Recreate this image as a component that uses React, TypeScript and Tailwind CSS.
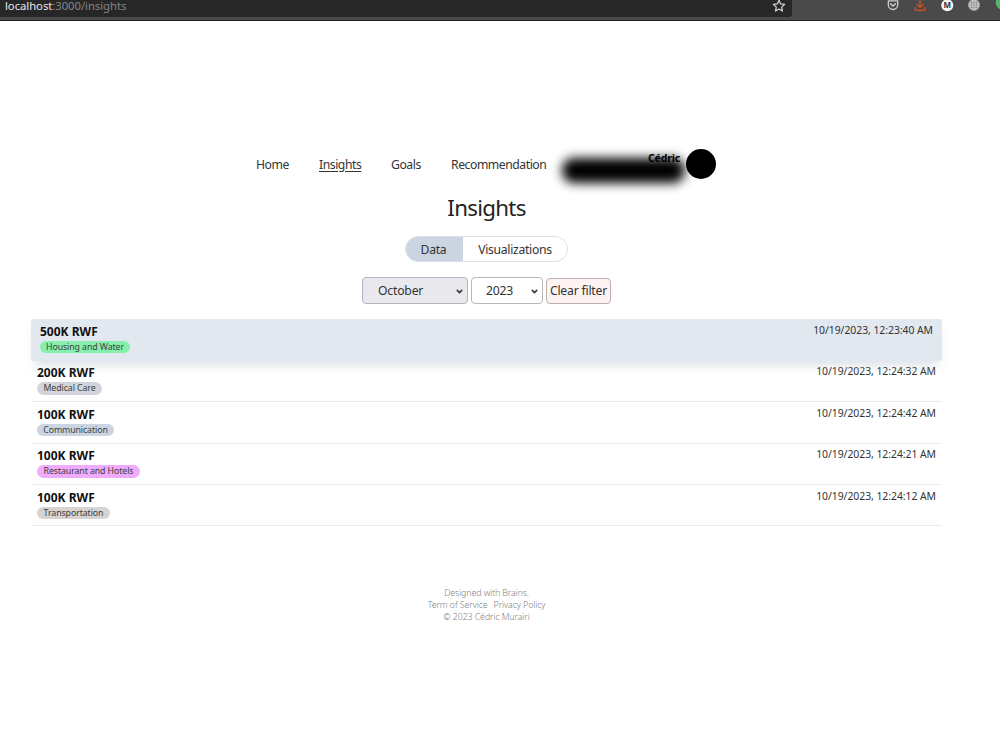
import { ChevronDown } from "lucide-react";
import clsx from "clsx";

const links = [
  { name: "Home", width: "w-[33px]" },
  { name: "Insights", width: "w-[42px]", active: true },
  { name: "Goals", width: "w-[30px]" },
  { name: "Recommendation", width: "w-[96px]" },
];

const records = [
  { amount: "500K RWF", category: "Housing and Water", color: "bg-[#86efac]", width: "w-[90px]", date: "10/19/2023, 12:23:40 AM", hovered: true },
  { amount: "200K RWF", category: "Medical Care", color: "bg-[#d1d5db]", width: "w-[65px]", date: "10/19/2023, 12:24:32 AM" },
  { amount: "100K RWF", category: "Communication", color: "bg-[#cbd5e1]", width: "w-[77px]", date: "10/19/2023, 12:24:42 AM" },
  { amount: "100K RWF", category: "Restaurant and Hotels", color: "bg-[#f0abfc]", width: "w-[103px]", date: "10/19/2023, 12:24:21 AM" },
  { amount: "100K RWF", category: "Transportation", color: "bg-[#d6d3d1]", width: "w-[73px]", date: "10/19/2023, 12:24:12 AM" },
];

function BrowserBar() {
  return (
    <div className="h-[21px] bg-[#4a4a4a] border-b border-[#222222] flex justify-between">
      <div className="w-[792px] h-[17px] bg-[#272727] rounded-br-[3px] flex justify-between pl-[5px] pr-[6px]">
        <p className="text-[11.3px] leading-[12px] tracking-[-0.05px] text-[#858585] whitespace-nowrap">
          <span className="text-[#e6e6e6]">localhost</span>:3000/insights
        </p>
        <svg width="14" height="14" viewBox="0 0 14 14" fill="none" stroke="#d8d8d8" strokeWidth="1.2" strokeLinejoin="round" className="-mt-px">
          <path d="M7 1.2l1.7 3.7 4 .5-3 2.7.8 4L7 10.1l-3.5 2 .8-4-3-2.7 4-.5z" />
        </svg>
      </div>
      <svg width="120" height="20" viewBox="880 0 120 20" fill="none">
        <path d="M888.3 .8h9.4v4a4.7 4.7 0 0 1-9.4 0z" stroke="#d0d0d0" strokeWidth="1.3" strokeLinejoin="round" />
        <path d="M890.5 3.8l2.5 2.3 2.5-2.3" stroke="#d0d0d0" strokeWidth="1.4" strokeLinecap="round" />
        <path d="M920 0v7M916.5 4l3.5 3.3 3.5-3.3M915.3 7v3.2h9.4V7" stroke="#c9502b" strokeWidth="1.4" />
        <circle cx="947.3" cy="5.3" r="6" fill="#f5f5f5" />
        <text x="947.3" y="8.1" textAnchor="middle" fontSize="8" fontWeight="700" fill="#333" fontFamily="Open Sans">M</text>
        <circle cx="974" cy="5" r="5.8" fill="#c8c8c8" />
        <path d="M968.8 2.5h10.4M968.3 5h11.4M968.8 7.5h10.4M971.5 0v10M974 0v10.8M976.5 0v10" stroke="#8f8f8f" strokeWidth="0.6" />
        <circle cx="1003" cy="2.5" r="7.3" fill="#59b36c" />
      </svg>
    </div>
  );
}

function Navbar() {
  return (
    <nav className="flex h-[30px] items-center ml-[256px] text-[12.2px] tracking-[-0.45px] text-[#333333]">
      <div className="flex gap-[30px] pt-[2px]">
        {links.map((link) => (
          <a key={link.name} className={clsx("whitespace-nowrap", link.width, link.active && "underline underline-offset-2")}>
            {link.name}
          </a>
        ))}
      </div>
      <div className="relative ml-[14px] w-[125px] h-[30px]">
        <div className="absolute left-px top-[9px] w-[123px] h-[25px] rounded-[12px] bg-black blur-[5.5px]"></div>
        <span className="absolute right-[6px] top-[3px] text-[10.6px] leading-[13px] tracking-[-0.2px] font-bold text-black">Cédric</span>
      </div>
      <div className="w-[30px] h-[30px] rounded-full bg-black"></div>
    </nav>
  );
}

function Filters() {
  return (
    <div className="flex gap-[3px] mt-[15px] h-[27px] text-[12.2px] tracking-[-0.2px] text-[#333333]">
      <button className="w-[106px] flex items-center justify-between pt-px pl-[15px] pr-[3px] rounded-[4px] border border-[#b4b4bf] bg-[#e9e9ed]">
        October
        <ChevronDown size={9} strokeWidth={4} />
      </button>
      <button className="w-[72px] flex items-center justify-between pt-px pl-[14px] pr-[3px] rounded-[4px] border border-[#b4b7c0] bg-white">
        2023
        <ChevronDown size={9} strokeWidth={4} />
      </button>
      <button className="w-[65px] mt-px rounded-[4px] border border-[#b9b0b5] bg-[#fef2f2] whitespace-nowrap">Clear filter</button>
    </div>
  );
}

export default function App() {
  return (
    <div className="h-[750px] w-full overflow-hidden bg-white font-['Noto_Sans',sans-serif]">
      <BrowserBar />
      <div className="w-[973px] pt-[128px]">
        <Navbar />
        <div className="flex flex-col items-center">
          <h1 className="mt-[13px] text-[22.3px] leading-[32px] tracking-[-0.7px] text-[#222222]">Insights</h1>
          <div className="mt-[12px] w-[163px] h-[26px] flex rounded-full border border-[#d8e0ea] overflow-hidden text-[12.2px] tracking-[-0.3px] text-[#333333]">
            <button className="w-[57px] pt-[2px] pr-[2px] bg-[#cbd5e1]">Data</button>
            <button className="flex-1 pt-[2px]">Visualizations</button>
          </div>
          <Filters />
        </div>
        <ul className="mt-[15.4px] ml-[31px] w-[911px]">
          {records.map((record) => (
            <li
              key={record.date}
              className={clsx(
                "flex justify-between h-[41.4px] pt-[4.6px] border-b",
                record.hovered
                  ? "relative px-[9px] bg-[#e2e8f0] border-[#e2e8f0] rounded-[2px] shadow-[0_8px_10px_-4px_rgba(148,163,184,0.35)]"
                  : "px-[6px] border-[#ececee]"
              )}
            >
              <div>
                <p className="text-[12px] leading-[15px] font-bold text-[#111111] whitespace-nowrap">{record.amount}</p>
                <p className={clsx("mt-[2px] h-[12.5px] rounded-full text-center text-[8.8px] leading-[12px] tracking-[-0.1px] text-[#404040] whitespace-nowrap", record.color, record.width)}>
                  {record.category}
                </p>
              </div>
              <p className="text-[10.4px] leading-[13px] tracking-[-0.04px] text-[#333333] whitespace-nowrap">{record.date}</p>
            </li>
          ))}
        </ul>
        <footer className="mt-[60.6px] text-center text-[8.8px] leading-[12px] tracking-[-0.08px] font-light text-[#808080]">
          <p>Designed with Brains.</p>
          <p className="flex justify-center gap-[6px]">
            <a>Term of Service</a>
            <a>Privacy Policy</a>
          </p>
          <p>© 2023 Cédric Murairi</p>
        </footer>
      </div>
    </div>
  );
}
